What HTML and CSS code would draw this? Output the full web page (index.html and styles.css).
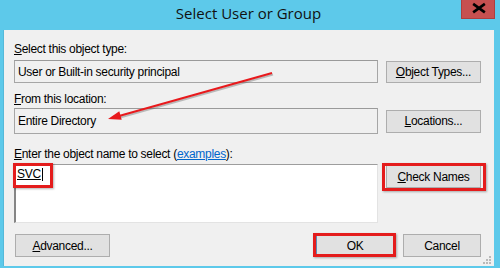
FILE: index.html
```html
<!DOCTYPE html>
<html>
<head>
<meta charset="utf-8">
<title>Select User or Group</title>
<link rel="stylesheet" href="styles.css">
</head>
<body>
<div class="window">
  <header class="titlebar">
    <span class="title">Select User or Group</span>
    <button class="close" aria-label="Close">
      <svg width="34" height="19" viewBox="0 0 34 19"><path d="M13.2 4.6 L22.8 11.6 M22.8 4.6 L13.2 11.6" stroke="#000" stroke-width="2.6" stroke-linecap="square"/></svg>
    </button>
  </header>
  <main class="content">
    <div class="label"><u>S</u>elect this object type:</div>
    <div class="row r1">
      <div class="field box1">User or Built-in security principal</div>
      <button class="btn"><u>O</u>bject Types...</button>
    </div>
    <div class="label l2"><u>F</u>rom this location:</div>
    <div class="row r2">
      <div class="field box2">Entire Directory</div>
      <button class="btn"><u>L</u>ocations...</button>
    </div>
    <div class="label l3"><u>E</u>nter the object name to select (<a class="link" href="#">examples</a>):</div>
    <div class="row r3">
      <div class="names"><span class="svc-mark"></span><span class="entry">SVC</span><span class="caret"></span></div>
      <button class="btn hl check"><u>C</u>heck Names</button>
    </div>
    <div class="footer">
      <button class="btn adv"><u>A</u>dvanced...</button>
      <div class="actions">
        <button class="btn ok hl">OK</button>
        <button class="btn cancel">Cancel</button>
      </div>
    </div>
    <svg class="grip" width="10" height="10" viewBox="0 0 10 10">
      <rect x="7" y="1" width="2" height="2" fill="#b9b9b9"/>
      <rect x="4" y="4" width="2" height="2" fill="#b9b9b9"/>
      <rect x="7" y="4" width="2" height="2" fill="#b9b9b9"/>
      <rect x="1" y="7" width="2" height="2" fill="#b9b9b9"/>
      <rect x="4" y="7" width="2" height="2" fill="#b9b9b9"/>
      <rect x="7" y="7" width="2" height="2" fill="#b9b9b9"/>
    </svg>
  </main>
  <svg class="arrow" width="500" height="268" viewBox="0 0 500 268">
    <g opacity="0.35" transform="translate(1,1.5)">
      <line x1="272" y1="73" x2="119" y2="116" stroke="#555" stroke-width="2"/>
    </g>
    <line x1="272" y1="73" x2="119" y2="116" stroke="#e8191c" stroke-width="2"/>
    <polygon points="108,119 121.7,119.8 119.3,111.2" fill="#e8191c"/>
  </svg>
</div>
</body>
</html>
```

FILE: styles.css
```css
* { box-sizing: border-box; }
html, body { margin: 0; padding: 0; background: #5dc9ea; }
body { font-family: "Liberation Sans", Arial, sans-serif; }

.window {
  position: relative;
  width: 500px;
  height: 268px;
  background: #5dc9ea;
  padding: 0 6px 2px 3px;
  display: flex;
  flex-direction: column;
  overflow: hidden;
}

.titlebar {
  height: 30px;
  display: flex;
  justify-content: center;
  flex-shrink: 0;
}
.title {
  font-family: "Open Sans", "Noto Sans", sans-serif;
  font-size: 15px;
  line-height: 26px;
  color: #111;
}
.close {
  position: absolute;
  top: 0;
  right: 5px;
  width: 34px;
  height: 19px;
  padding: 0;
  margin: 0;
  border: 1px solid #ad3f3f;
  border-top: none;
  background: #c75050;
  display: block;
}
.close svg { display: block; position: absolute; left: -1px; top: 0; }

.content {
  position: relative;
  flex: 1;
  background: #f0f0f0;
  border-left: 1px solid #55b9d9;
  padding: 12px 13px 0 10px;
  font-size: 12px;
  line-height: 14px;
  letter-spacing: -0.3px;
  color: #000;
}

.label { height: 14px; white-space: nowrap; }
.label u { text-decoration: underline; }
.l2 { margin-top: 9px; }
.l3 { margin-top: 13px; }
.link { color: #0066cc; text-decoration: underline; }

.row { display: flex; gap: 8px; }
.r1 { margin-top: 4px; align-items: flex-end; }
.r2 { margin-top: 2px; align-items: center; }
.r3 { margin-top: 3px; align-items: flex-start; }

.field {
  width: 364px;
  background: #f0f0f0;
  border: 1px solid #a6a6a6;
  border-top-color: #9a9a9a;
  padding: 0 3px;
  display: flex;
  align-items: center;
  white-space: nowrap;
}
.box1 { height: 23px; }
.box2 { height: 26px; }

.btn {
  font-family: inherit;
  font-size: 12px;
  letter-spacing: -0.3px;
  line-height: 14px;
  color: #000;
  background: #e1e1e1;
  border: 1px solid #adadad;
  padding: 0;
  margin: 0;
  width: 95px;
  height: 22px;
  position: relative;
  white-space: nowrap;
}
.r2 .btn { height: 23px; }

.names {
  position: relative;
  width: 364px;
  height: 59px;
  background: #fff;
  border-top: 1px solid #9d9d9d;
  border-left: 2px solid #858585;
  border-right: 1px solid #e3e3e3;
  border-bottom: 1px solid #e3e3e3;
  padding: 2px 1px;
  display: flex;
  align-items: flex-start;
}
.entry { text-decoration: underline; text-underline-offset: 1px; }
.caret {
  display: inline-block;
  width: 1px;
  height: 13px;
  background: #000;
  margin-left: 1px;
  margin-top: 1px;
}
.svc-mark {
  position: absolute;
  left: -3px;
  top: -2px;
  width: 40px;
  height: 25px;
  border: 3px solid #e41c1c;
  box-shadow: 1px 1px 2px rgba(0,0,0,0.3);
}

.check { margin-top: 1px; height: 23px; }

.hl::after {
  content: "";
  position: absolute;
  border: 3px solid #e41c1c;
  box-shadow: 1px 1px 2px rgba(0,0,0,0.3);
  pointer-events: none;
}
.check::after { top: -3px; right: -6px; bottom: -4px; left: -5px; }
.ok::after { top: -2px; right: -3px; bottom: -1px; left: -4px; }

.footer {
  margin-top: 11px;
  display: flex;
  justify-content: space-between;
  align-items: center;
}
.adv { margin-left: 1px; height: 23px; }
.actions { display: flex; gap: 9px; }
.ok, .cancel { width: 78px; height: 23px; }
.ok { border-color: #5b8ab5; }

.grip { position: absolute; right: 2px; bottom: 1px; display: block; }

.arrow { position: absolute; left: 0; top: 0; pointer-events: none; }
```
